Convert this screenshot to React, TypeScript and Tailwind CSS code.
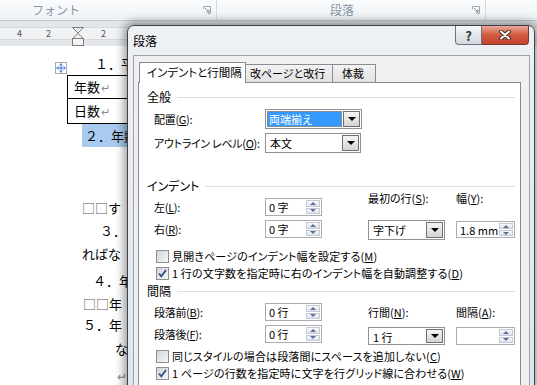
import { Move } from 'lucide-react';

const font = "font-['Noto_Sans_CJK_JP','Noto_Sans',sans-serif]";
const palt = '[font-feature-settings:"palt"]';

function Launcher() {
  return (
    <svg width="8" height="8" viewBox="0 0 8 8" className="shrink-0">
      <path d="M0.5 3 V0.5 H7.5 V7.5 H5" fill="none" stroke="#9aa5b3" />
      <path d="M2 2 L6 6 M6 3.5 V6 H3.5" fill="none" stroke="#7f8a98" />
    </svg>
  );
}

function Ribbon() {
  return (
    <div className="flex h-[21px] border-b border-[#c3cad3] bg-gradient-to-b from-[#fbfcfd] to-[#eef1f5] text-[12px] leading-[20px] text-[#8794a5]">
      <div className="flex w-[217px] items-center border-r border-[#d5dae1] pl-[32px] pr-[5px]">
        <span className="flex-1">フォント</span>
        <Launcher />
      </div>
      <div className="flex w-[269px] items-center border-r border-[#d5dae1] pl-[113px] pr-[5px]">
        <span className="flex-1">段落</span>
        <Launcher />
      </div>
    </div>
  );
}

function Ruler() {
  return (
    <div className="relative h-[25px] bg-[#e3e7ec] pt-[6px]">
      <div className="relative h-[13px] border-y border-[#d3d8de] bg-[#f1f2f4] text-[9px] leading-[11px] text-[#555]">
        <span className="absolute left-[17px]">4</span>
        <span className="absolute left-[46px]">2</span>
        <span className="absolute left-[101px]">2</span>
      </div>
      <svg width="14" height="20" viewBox="0 0 14 20" className="absolute left-[71px] top-[6px]">
        <path d="M1.5 0.5 H12.5 L7 6 Z" fill="#f3f3f3" stroke="#7d7d7d" />
        <path d="M7 6.5 L12.5 11.5 H1.5 Z" fill="#f3f3f3" stroke="#7d7d7d" />
        <rect x="1.5" y="11.5" width="11" height="7" fill="#f3f3f3" stroke="#7d7d7d" />
      </svg>
    </div>
  );
}

function Ret() {
  return <span className="ml-px text-[11px] text-[#8c8c8c]">↵</span>;
}

function Doc() {
  return (
    <div className="flex flex-col text-[13px] leading-[22px] whitespace-nowrap text-black">
      <div className="mt-[7px] h-[22px] pl-[95px]">１．平成</div>
      <div className="relative ml-[67px] w-[100px] border border-black">
        <div className="absolute left-[-13px] top-[-14px] flex h-[12px] w-[12px] items-center justify-center border border-[#a7abb0] bg-white">
          <Move size={10} strokeWidth={2.2} color="#2f6fd0" />
        </div>
        <div className="flex h-[23px] items-center border-b border-black pl-[6px]">
          年数<Ret />
        </div>
        <div className="flex h-[24px] items-center pl-[6px]">
          日数<Ret />
        </div>
      </div>
      <div className="ml-[82px] flex h-[23px] w-[70px] items-center bg-[#a9cbef] pl-[3px]">２．年数</div>
      <div className="mt-[50px] h-[23px] pl-[82px] text-[#555]">
        □□<span className="text-black">す</span>
      </div>
      <div className="h-[23px] pl-[100px]">３．</div>
      <div className="h-[27px] pl-[82px]">ればな</div>
      <div className="h-[23px] pl-[93px]">４．年</div>
      <div className="h-[21px] pl-[83px] text-[#555]">
        □□<span className="text-black">年</span>
      </div>
      <div className="h-[24px] pl-[83px]">５．年</div>
      <div className="h-[27px] pl-[115px]">な</div>
      <div className="h-[22px] pl-[117px] text-[12px] text-[#8c8c8c]">↵</div>
    </div>
  );
}

function Spin({ value, w = 'w-[57px]', h = 'h-[18px]' }: { value: string; w?: string; h?: string }) {
  return (
    <div className={`flex ${w} ${h} border border-[#a9adb3] bg-white`}>
      <span className="flex-1 whitespace-nowrap pl-[3px] leading-[16px]">{value}</span>
      <div className="flex w-[15px] shrink-0 flex-col gap-px py-px pr-px">
        <div className="flex flex-1 items-center justify-center border border-[#c4cbd5] bg-gradient-to-b from-[#f7f8fa] to-[#dfe4ea]">
          <div className="h-0 w-0 border-x-[3px] border-b-[3px] border-x-transparent border-b-[#5c7196]" />
        </div>
        <div className="flex flex-1 items-center justify-center border border-[#c4cbd5] bg-gradient-to-b from-[#f7f8fa] to-[#dfe4ea]">
          <div className="h-0 w-0 border-x-[3px] border-t-[3px] border-x-transparent border-t-[#5c7196]" />
        </div>
      </div>
    </div>
  );
}

function DropBtn() {
  return (
    <div className="flex w-[17px] shrink-0 items-center justify-center border border-[#707070] bg-gradient-to-b from-[#f4f4f4] to-[#d4d4d4]">
      <div className="h-0 w-0 border-x-[4px] border-t-[4px] border-x-transparent border-t-black" />
    </div>
  );
}

function Select({ value, w, selected, h = 'h-[20px]' }: { value: string; w: string; selected?: boolean; h?: string }) {
  return (
    <div className={`flex ${w} ${h} border border-[#8f9399] bg-white p-px`}>
      <div className="flex flex-1 pr-px">
        {selected ? (
          <span className="flex-1 border border-dotted border-[#d9822b] bg-[#3399ff] pl-px leading-[14px] text-white">{value}</span>
        ) : (
          <span className="flex-1 pl-[3px] leading-[16px]">{value}</span>
        )}
      </div>
      <DropBtn />
    </div>
  );
}

function Check({ checked, children }: { checked?: boolean; children: React.ReactNode }) {
  return (
    <div className="flex h-[16px] items-center gap-[3px] pl-[17px]">
      <div className="flex h-[13px] w-[13px] items-center justify-center border border-[#8e8f8f] bg-gradient-to-br from-[#d2d4d6] to-[#f7f7f7]">
        {checked && (
          <svg width="11" height="11" viewBox="0 0 11 11">
            <path d="M2 5.5 L4.3 8.3 L9 2" fill="none" stroke="#2f4f92" strokeWidth="1.8" />
          </svg>
        )}
      </div>
      <span className="leading-[16px] tracking-[0.15px]">{children}</span>
    </div>
  );
}

function Heading({ text, mt }: { text: string; mt: string }) {
  return (
    <div className={`flex h-[12px] items-center gap-[6px] pl-[8px] pr-[5px] ${mt}`}>
      <span className="text-[12px] leading-[12px]">{text}</span>
      <div className="h-px flex-1 bg-[#d5dfe6]" />
    </div>
  );
}

function Row({ label, children, h = 'h-[20px]', mt }: { label: React.ReactNode; children: React.ReactNode; h?: string; mt: string }) {
  return (
    <div className={`flex ${h} items-center ${mt}`}>
      <span className="w-[111px] tracking-[-0.3px]">{label}</span>
      {children}
    </div>
  );
}

function Dialog() {
  return (
    <div className="absolute left-[127px] top-[25px] flex h-[372px] w-[408px] flex-col rounded-t-[7px] border border-[#3e434b] bg-gradient-to-b from-[#eef1f4] to-[#dfe5ec] shadow-[0_0_10px_3px_rgba(0,0,0,0.4)]">
      <div className="relative h-[29px] shrink-0 pl-[5px] pt-[8px] text-[12px] leading-[14px]">
        段落
        <div className="absolute right-[5px] top-0 flex">
          <div className="flex h-[19px] w-[27px] items-center justify-center rounded-bl-[4px] border border-t-0 border-[#6c737e] bg-gradient-to-b from-[#f5f7f9] to-[#d2d8df] text-[13px] font-bold leading-none text-[#333]">
            ?
          </div>
          <div className="flex h-[19px] w-[47px] items-center justify-center rounded-br-[4px] border border-l-0 border-t-0 border-[#6d3a31] bg-gradient-to-b from-[#eaa898] via-[#d25a41] to-[#c5412b]">
            <svg width="14" height="10" viewBox="0 0 14 10">
              <path d="M3 1.5 L11 8.5 M11 1.5 L3 8.5" stroke="#4a2a25" strokeWidth="4" strokeLinecap="round" />
              <path d="M3 1.5 L11 8.5 M11 1.5 L3 8.5" stroke="#fff" strokeWidth="2" strokeLinecap="round" />
            </svg>
          </div>
        </div>
      </div>
      <div className={`ml-[5px] mr-[4px] flex-1 border border-b-0 border-[#9ca2aa] bg-[#f0f0f0] pl-[4px] pt-[6px] text-[11px] whitespace-nowrap ${palt}`}>
        <div className="flex h-[21px] items-end pl-px">
          <div className="relative z-10 flex h-[21px] w-[107px] items-center border border-b-0 border-[#898c95] bg-white pl-[7px] text-[11.5px]">
            インデントと行間隔
          </div>
          <div className="flex h-[19px] w-[87px] items-center border border-l-0 border-[#898c95] bg-gradient-to-b from-[#f3f3f3] to-[#e1e1e1] pl-[4px]">
            改ページと改行
          </div>
          <div className="flex h-[19px] w-[43px] items-center border border-l-0 border-[#898c95] bg-gradient-to-b from-[#f3f3f3] to-[#e1e1e1] pl-[9px]">
            体裁
          </div>
        </div>
        <div className="relative -mt-px h-[320px] w-[383px] border border-[#898c95] bg-white text-black">
          <Heading text="全般" mt="mt-[8px]" />
          <div className="pl-[15px]">
            <Row mt="mt-[6px]" label={<>配置(<u>G</u>):</>}>
              <Select value="両端揃え" w="w-[97px]" selected />
            </Row>
            <Row mt="mt-[4px]" label={<>アウトライン レベル(<u>O</u>):</>}>
              <Select value="本文" w="w-[96px]" />
            </Row>
          </div>
          <Heading text="インデント" mt="mt-[27px]" />
          <div className="flex pl-[15px]">
            <div className="w-[214px]">
              <Row mt="mt-[6px]" h="h-[18px]" label={<>左(<u>L</u>):</>}>
                <Spin value="0 字" />
              </Row>
              <Row mt="mt-[4px]" h="h-[18px]" label={<>右(<u>R</u>):</>}>
                <Spin value="0 字" />
              </Row>
            </div>
            <div className="w-[88px]">
              <div className="h-[12px] leading-[12px]">最初の行(<u>S</u>):</div>
              <div className="mt-[16px]">
                <Select value="字下げ" w="w-[77px]" />
              </div>
            </div>
            <div>
              <div className="h-[12px] leading-[12px]">幅(<u>Y</u>):</div>
              <div className="mt-[17px]">
                <Spin value="1.8 mm" w="w-[59px]" h="h-[17px]" />
              </div>
            </div>
          </div>
          <div className="mt-[8px]">
            <Check>見開きページのインデント幅を設定する(<u>M</u>)</Check>
          </div>
          <div className="mt-[1px]">
            <Check checked>1 行の文字数を指定時に右のインデント幅を自動調整する(<u>D</u>)</Check>
          </div>
          <Heading text="間隔" mt="mt-[4px]" />
          <div className="flex pl-[15px]">
            <div className="w-[214px]">
              <Row mt="mt-[6px]" h="h-[18px]" label={<>段落前(<u>B</u>):</>}>
                <Spin value="0 行" />
              </Row>
              <Row mt="mt-[4px]" h="h-[18px]" label={<>段落後(<u>F</u>):</>}>
                <Spin value="0 行" />
              </Row>
            </div>
            <div className="w-[88px]">
              <div className="mt-[9px] h-[12px] leading-[12px]">行間(<u>N</u>):</div>
              <div className="mt-[9px]">
                <Select value="1 行" w="w-[77px]" h="h-[18px]" />
              </div>
            </div>
            <div>
              <div className="mt-[9px] h-[12px] leading-[12px]">間隔(<u>A</u>):</div>
              <div className="mt-[9px]">
                <Spin value="" w="w-[59px]" h="h-[18px]" />
              </div>
            </div>
          </div>
          <div className="mt-[3px]">
            <Check>同じスタイルの場合は段落間にスペースを追加しない(<u>C</u>)</Check>
          </div>
          <div className="mt-[1px]">
            <Check checked>1 ページの行数を指定時に文字を行グリッド線に合わせる(<u>W</u>)</Check>
          </div>
        </div>
      </div>
    </div>
  );
}

export default function App() {
  return (
    <div className={`relative h-[385px] w-[537px] overflow-hidden bg-white ${font}`}>
      <Ribbon />
      <Ruler />
      <Doc />
      <Dialog />
    </div>
  );
}
